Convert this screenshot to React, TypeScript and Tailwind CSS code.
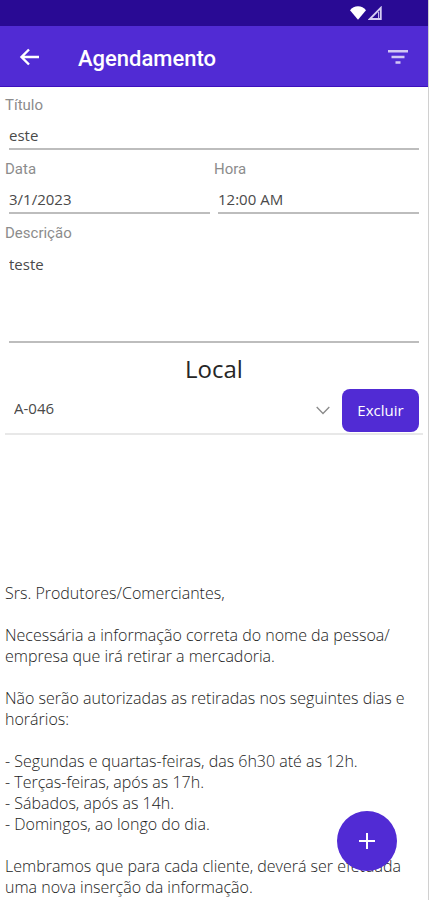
import React from "react"

const inputClass =
  "block h-[34px] w-full rounded-none border-b-2 border-[#bdbdbd] bg-transparent pt-1.5 text-[15px] text-[#4a4a4a] outline-none"

interface FieldProps {
  id: string
  label: string
  children: React.ReactNode
}

function Field({ id, label, children }: FieldProps) {
  return (
    <div>
      <label htmlFor={id} className="block font-['Roboto',sans-serif] text-[15px] leading-[22px] text-[#8c8c8c]">
        {label}
      </label>
      <div className="px-1">{children}</div>
    </div>
  )
}

function StatusBar() {
  return (
    <div className="flex h-[26px] items-center justify-end gap-0.5 bg-[#290a94] pr-[46px]">
      <svg width="16" height="14" viewBox="0 0 16 14" fill="#fff" aria-hidden="true">
        <path d="M8 13.8 0 4.2C2 1.6 4.8.2 8 .2s6 1.400 8 4z" />
      </svg>
      <svg width="14" height="14" viewBox="0 0 14 14" fill="none" stroke="#d5cdf2" strokeWidth="1.800" aria-hidden="true">
        <path d="M12.800 1.800v11.200H1.800z" />
        <path d="M10.600 6v6" strokeWidth="1" />
      </svg>
    </div>
  )
}

function Header() {
  return (
    <header className="flex h-[61px] items-center border-b border-[#3d10bd] bg-[#512bd4] px-[18px] pt-0.5">
      <button type="button" aria-label="Voltar" className="mr-9 flex size-6 items-center justify-center">
        <svg width="24" height="24" viewBox="0 0 24 24" fill="none" stroke="#fff" strokeWidth="2.400" aria-hidden="true">
          <path d="M21 12H4M11 4.500l-7.500 7.500 7.500 7.500" />
        </svg>
      </button>
      <h1 className="flex-1 pt-1 font-['Roboto',sans-serif] text-[22px] leading-8 font-medium text-white">
        Agendamento
      </h1>
      <button type="button" aria-label="Filtrar" className="flex size-6 items-center justify-center">
        <svg width="22" height="16" viewBox="0 0 22 16" fill="#d3c8f5" aria-hidden="true">
          <path d="M1 1h20v2.600H1zM4.500 6.700h13v2.600h-13zM8.500 12.200h5v2.600h-5z" />
        </svg>
      </button>
    </header>
  )
}

export default function App() {
  return (
    <div className="min-h-screen border-r border-[#d0d0d0] bg-white font-['Open_Sans',sans-serif] text-[15px] text-[#4a4a4a]">
      <StatusBar />
      <Header />

      <main className="px-[5px] pt-[7px]">
        <form className="flex flex-col gap-2">
          <Field id="titulo" label="Título">
            <input id="titulo" type="text" defaultValue="este" className={inputClass} />
          </Field>
          <div className="grid grid-cols-2">
            <Field id="data" label="Data">
              <input id="data" type="text" defaultValue="3/1/2023" className={inputClass} />
            </Field>
            <Field id="hora" label="Hora">
              <input id="hora" type="text" defaultValue="12:00 AM" className={inputClass} />
            </Field>
          </div>
          <Field id="descricao" label="Descrição">
            <textarea
              id="descricao"
              defaultValue="teste"
              className="block h-[99px] w-full resize-none rounded-none border-b-2 border-[#bdbdbd] pt-2.5 leading-5 outline-none"
            />
          </Field>
        </form>

        <h2 className="mt-2 text-center text-2xl leading-9 text-[#262626]">Local</h2>

        <div className="flex h-12 items-center border-b-2 border-[#e8e8e8] pr-1">
          <div className="relative flex-1">
            <select
              aria-label="Local"
              defaultValue="A-046"
              className="h-10 w-full appearance-none bg-transparent pb-1 pl-[9px] outline-none"
            >
              <option>A-046</option>
            </select>
            <svg
              className="pointer-events-none absolute top-4 right-3"
              width="14"
              height="9"
              viewBox="0 0 14 9"
              fill="none"
              stroke="#8a8a8a"
              strokeWidth="1.300"
              aria-hidden="true"
            >
              <path d="M.7 1 7 7.500 13.300 1" />
            </svg>
          </div>
          <button type="button" className="h-[43px] w-[77px] rounded-lg bg-[#512bd4] text-[15px] text-white">
            Excluir
          </button>
        </div>

        <div className="mt-[148px] space-y-[21px] text-base leading-[21px] font-light text-[#1c1c1c]">
          <p>Srs. Produtores/Comerciantes,</p>
          <p>
            Necessária a informação correta do nome da pessoa/
            <wbr />
            empresa que irá retirar a mercadoria.
          </p>
          <p>Não serão autorizadas as retiradas nos seguintes dias e horários:</p>
          <ul>
            <li>- Segundas e quartas-feiras, das 6h30 até as 12h.</li>
            <li>- Terças-feiras, após as 17h.</li>
            <li>- Sábados, após as 14h.</li>
            <li>- Domingos, ao longo do dia.</li>
          </ul>
          <p>Lembramos que para cada cliente, deverá ser efetuada uma nova inserção da informação.</p>
        </div>
      </main>

      <button
        type="button"
        aria-label="Adicionar"
        className="fixed right-8 bottom-[29px] flex size-[60px] items-center justify-center rounded-full bg-[#512bd4]"
      >
        <svg width="16" height="16" viewBox="0 0 16 16" fill="none" stroke="#fff" strokeWidth="2" aria-hidden="true">
          <path d="M8 0v16M0 8h16" />
        </svg>
      </button>
    </div>
  )
}
